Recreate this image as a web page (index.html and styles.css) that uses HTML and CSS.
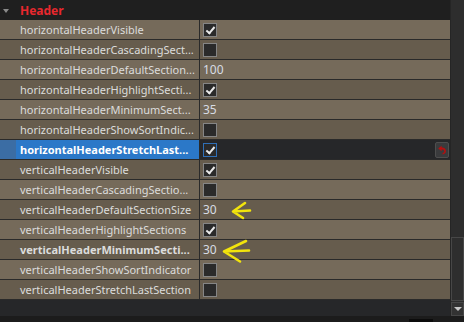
FILE: index.html
```html
<!DOCTYPE html>
<html>
<head>
<meta charset="utf-8">
<link rel="stylesheet" href="styles.css">
</head>
<body>
<div class="app">
  <div class="tree">
    <div class="group-header">
      <span class="branch"></span>
      <span class="group-title">Header</span>
    </div>
    <div class="row light"><div class="name">horizontalHeaderVisible</div><div class="value"><span class="cb on"></span></div></div>
    <div class="row dark"><div class="name">horizontalHeaderCascadingSect...</div><div class="value"><span class="cb"></span></div></div>
    <div class="row light"><div class="name">horizontalHeaderDefaultSection...</div><div class="value"><span class="num">100</span></div></div>
    <div class="row dark"><div class="name">horizontalHeaderHighlightSecti...</div><div class="value"><span class="cb on"></span></div></div>
    <div class="row light"><div class="name">horizontalHeaderMinimumSect...</div><div class="value"><span class="num">35</span></div></div>
    <div class="row dark"><div class="name">horizontalHeaderShowSortIndic...</div><div class="value"><span class="cb"></span></div></div>
    <div class="row selected"><div class="name bold">horizontalHeaderStretchLast...</div><div class="value"><span class="cb on focus"></span><span class="reset"><svg width="10" height="10" viewBox="0 0 10 10"><path d="M1.2 3.6 L4.6 0.8 L4.6 2.5 C7.6 2.3 9.3 4.2 8.9 6.6 C8.6 8.3 7.1 9.4 5.6 9.4 L5.6 7.8 C6.6 7.8 7.3 7.1 7.3 6.2 C7.3 4.9 6.2 4.4 4.6 4.6 L4.6 6.3 Z" fill="#b80e0e"/></svg></span></div></div>
    <div class="row dark"><div class="name">verticalHeaderVisible</div><div class="value"><span class="cb on"></span></div></div>
    <div class="row light"><div class="name">verticalHeaderCascadingSectio...</div><div class="value"><span class="cb"></span></div></div>
    <div class="row dark"><div class="name">verticalHeaderDefaultSectionSize</div><div class="value"><span class="num">30</span></div></div>
    <div class="row light"><div class="name">verticalHeaderHighlightSections</div><div class="value"><span class="cb on"></span></div></div>
    <div class="row dark"><div class="name bold">verticalHeaderMinimumSecti...</div><div class="value"><span class="num">30</span></div></div>
    <div class="row light"><div class="name">verticalHeaderShowSortIndicator</div><div class="value"><span class="cb"></span></div></div>
    <div class="row dark"><div class="name">verticalHeaderStretchLastSection</div><div class="value"><span class="cb"></span></div></div>
    <div class="tree-rest"></div>
  </div>
  <div class="scrollbar">
    <div class="track"></div>
    <div class="handle"></div>
    <div class="btn-down"><span class="tri"></span></div>
  </div>
</div>
<div class="footer"><span class="black-bit"></span></div>
<svg class="marks" width="464" height="322" viewBox="0 0 464 322">
  <g fill="none" stroke="#f2e40c" stroke-width="2.6" stroke-linecap="round" stroke-linejoin="round">
    <path d="M250 210.5 L233 211.5 M233 211.5 L245 203 M233 211.5 L243 218"/>
    <path d="M249 250.5 L224 251.5 M224 251.5 L246 241 M224 251.5 L240 261.5"/>
  </g>
</svg>
</body>
</html>
```
FILE: styles.css
```css
html, body {
  margin: 0;
  padding: 0;
  background: #1e1e1e;
}
body {
  width: 464px;
  height: 322px;
  overflow: hidden;
  position: relative;
  font-family: "Noto Sans", "Open Sans", sans-serif;
  font-size: 11px;
  color: #dcdcdc;
}
.app {
  display: flex;
  height: 316px;
}
.tree {
  width: 450px;
  display: flex;
  flex-direction: column;
  background: #262729;
}
.group-header {
  height: 20px;
  background: #1f1f1f;
  display: flex;
  align-items: center;
}
.branch {
  width: 0;
  height: 0;
  margin-left: 3px;
  margin-right: 11px;
  border-left: 3px solid transparent;
  border-right: 3px solid transparent;
  border-top: 4px solid #8a8a8a;
  margin-top: 1px;
}
.group-title {
  color: #e8282e;
  font-weight: bold;
  font-size: 12px;
}
.row {
  display: flex;
  height: 19px;
  border-bottom: 1px solid #2a2a2a;
  line-height: 19px;
}
.row.light { background: #756a5a; }
.row.dark { background: #665c4d; }
.name {
  width: 179px;
  padding-left: 20px;
  border-right: 1px solid #2a2a2a;
  white-space: nowrap;
  overflow: hidden;
  text-overflow: clip;
}
.name.bold {
  font-weight: bold;
}
.value {
  flex: 1;
  display: flex;
  align-items: center;
  padding-left: 3px;
}
.row.selected {
  background: #262729;
}
.row.selected .name {
  background: linear-gradient(to right, #3b6da4 0 16px, #2b78c8 16px);
  color: #ffffff;
}
.cb {
  width: 12px;
  height: 12px;
  border: 1px solid #858585;
  background: #2a2a2a;
  position: relative;
}
.cb.focus {
  border-color: #2f6fb6;
}
.cb.on::after {
  content: "";
  position: absolute;
  left: 4px;
  top: 1px;
  width: 3px;
  height: 7px;
  border-right: 2px solid #e8e8e8;
  border-bottom: 2px solid #e8e8e8;
  transform: rotate(40deg);
}
.num {
  color: #d8dce4;
  font-size: 12px;
}
.reset {
  margin-left: auto;
  margin-right: 1px;
  width: 12px;
  height: 14px;
  border: 1px solid #4e4e4e;
  border-radius: 2px;
  background: #3a3b3d;
  display: flex;
  align-items: center;
  justify-content: center;
}
.tree-rest {
  flex: 1;
}
.scrollbar {
  width: 14px;
  display: flex;
  flex-direction: column;
  background: #2d2d2d;
  border-left: 1px solid #252525;
  box-sizing: border-box;
}
.track {
  height: 238px;
}
.handle {
  height: 62px;
  border: 1px solid #474747;
  background: #2e2e2e;
}
.btn-down {
  height: 12px;
  border: 1px solid #474747;
  margin-top: 1px;
  background: #333333;
  display: flex;
  align-items: center;
  justify-content: center;
}
.tri {
  width: 0;
  height: 0;
  border-left: 4px solid transparent;
  border-right: 4px solid transparent;
  border-top: 4px solid #c8c8c8;
}
.footer {
  height: 6px;
  background: #1c1c1c;
  display: flex;
  align-items: flex-end;
}
.black-bit {
  margin-left: 409px;
  width: 24px;
  height: 3px;
  background: #0c0c0c;
}
.marks {
  position: absolute;
  left: 0;
  top: 0;
  pointer-events: none;
}
```
